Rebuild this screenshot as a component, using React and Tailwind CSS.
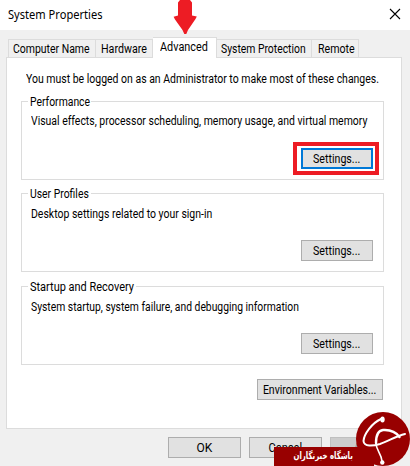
import React from "react";

const tabs = [
  { name: "Computer Name", box: "w-[88px] pl-[4px]", scale: "scale-x-[0.872]" },
  { name: "Hardware", box: "w-[57px] pl-[5px]", scale: "scale-x-[0.89]" },
  { name: "Advanced", box: "w-[64px] pl-[7px]", scale: "scale-x-[0.905]", active: true },
  { name: "System Protection", box: "w-[95px] pl-[4px]", scale: "scale-x-[0.863]" },
  { name: "Remote", box: "w-[47px] pl-[6px]", scale: "scale-x-[0.885]" },
];

const groups = [
  {
    title: "Performance",
    titleBox: "w-[63px]",
    titleScale: "scale-x-[0.865]",
    text: "Visual effects, processor scheduling, memory usage, and virtual memory",
    textBox: "pt-[13px] h-[28px]",
    textScale: "scale-x-[0.871]",
    focused: true,
  },
  {
    title: "User Profiles",
    titleBox: "w-[63px]",
    titleScale: "scale-x-[0.866]",
    text: "Desktop settings related to your sign-in",
    textBox: "pt-[14px] h-[29px]",
    textScale: "scale-x-[0.873]",
  },
  {
    title: "Startup and Recovery",
    titleBox: "w-[108px]",
    titleScale: "scale-x-[0.914]",
    text: "System startup, system failure, and debugging information",
    textBox: "pt-[14px] h-[29px]",
    textScale: "scale-x-[0.861]",
    spacing: "mt-px",
  },
];

const Label = ({ children, className = "" }) => (
  <span className={`block origin-left whitespace-nowrap ${className}`}>
    {children}
  </span>
);

const Button = ({ children, className = "", scale = "scale-x-[0.885]" }) => (
  <button
    type="button"
    className={`flex h-[21px] shrink-0 items-center justify-center pt-[2px] ${className}`}
  >
    <span className={`block whitespace-nowrap ${scale}`}>{children}</span>
  </button>
);

const GroupBox = ({ group }) => (
  <section className={`h-[86px] w-[363px] ${group.spacing || ""}`}>
    {/* title sits in the middle of the top border */}
    <div className="-mb-[8px] flex h-[15px] items-center">
      <span className="h-px w-[7px] bg-[#dcdcdc]" />
      <div className={`pt-[2px] pl-[2px] ${group.titleBox}`}>
        <Label className={`w-0 ${group.titleScale}`}>{group.title}</Label>
      </div>
      <span className="h-px flex-1 bg-[#dcdcdc]" />
    </div>
    <div className="h-[79px] border border-t-0 border-[#dcdcdc]">
      <div className={`pl-[9px] ${group.textBox}`}>
        <Label className={`w-0 ${group.textScale}`}>{group.text}</Label>
      </div>
      <div className="flex justify-end">
        {group.focused ? (
          <div className="mt-[13px] mr-[4px] border-4 border-[#ed1c24] py-[2px] pr-[2px] pl-[4px]">
            <Button className="w-[72px] border-2 border-[#0078d7] bg-[#e1e1e1]">
              Settings...
            </Button>
          </div>
        ) : (
          <Button className="mt-[18px] mr-[10px] w-[72px] border border-[#adadad] bg-[#e1e1e1]">
            Settings...
          </Button>
        )}
      </div>
    </div>
  </section>
);

const Arrow = () => (
  <svg className="absolute top-0 left-[173px]" width="25" height="35" viewBox="0 0 25 35">
    <path
      d="M7 0H17L19 2.5V15.5L23.8 16.6L22.5 19L15 30L13.3 34H11.3L9.5 30L2 19.5L0.6 16.8L5 15.5V2.5Z"
      fill="#ed1c24"
    />
  </svg>
);

const Watermark = () => (
  <div className="absolute top-[412px] left-[274px] h-[54px] w-[136px]">
    <div
      dir="rtl"
      className="absolute top-[35px] left-0 flex h-[19px] w-[100px] bg-[#980000] pt-[2px] pr-[21px]"
    >
      <span className="block origin-right scale-x-[0.7] font-['DejaVu_Sans',sans-serif] text-[10px] leading-[14px] font-bold whitespace-nowrap text-white">
        باشگاه خبرنگاران
      </span>
    </div>
    <svg className="absolute top-0 left-[82px]" width="54" height="54" viewBox="0 0 54 54">
      <circle cx="27" cy="27" r="27" fill="#980000" />
      <g fill="none" stroke="#fff" strokeLinecap="round" strokeLinejoin="round">
        <path d="M25 7C16 11 8 22 7.5 29C8 35 17 34 24 32C33 29 40 24 49 22" strokeWidth="2" />
        <path d="M20 31C20 23 22 18.5 27 18C34 17.5 40 20 43.5 25" strokeWidth="2.4" />
        <path d="M20 31C20 38 25 41 26 49" strokeWidth="1.6" />
      </g>
      <ellipse cx="26.5" cy="7.5" rx="2.2" ry="3" fill="#fff" />
      <circle cx="26.3" cy="50.5" r="2.2" fill="#fff" />
    </svg>
  </div>
);

const App = () => {
  return (
    <div className="relative flex h-[466px] w-[410px] flex-col overflow-hidden bg-[#f0f0f0] font-['Roboto',sans-serif] text-[12px] leading-[15px] text-black">
      {/* Title bar */}
      <header className="flex h-[30px] items-center justify-between bg-white pr-[9px] pb-[2px] pl-[8px]">
        <Label className="scale-x-[0.925] font-['Noto_Sans',sans-serif]">System Properties</Label>
        <svg width="12" height="12" viewBox="0 0 12 12" stroke="#000" strokeWidth="1.1">
          <path d="M1 1L11 11M11 1L1 11" />
        </svg>
      </header>

      {/* Tabs */}
      <nav className="flex h-[27px] items-end pl-[8px]">
        {tabs.map((tab) => (
          <div
            key={tab.name}
            className={`border-t border-r border-[#dcdcdc] pt-[2px] first:border-l ${tab.box} ${
              tab.active ? "z-10 -mb-px h-[21px] bg-white" : "h-[18px]"
            }`}
          >
            <Label className={`w-0 ${tab.scale}`}>{tab.name}</Label>
          </div>
        ))}
      </nav>

      {/* Advanced page */}
      <main className="ml-[6px] h-[372px] w-[396px] border border-[#dcdcdc] bg-white pl-[14px]">
        <div className="h-[36px] pt-[14px] pl-[5px]">
          <Label className="w-0 scale-x-[0.873]">
            You must be logged on as an Administrator to make most of these changes.
          </Label>
        </div>
        <div className="flex flex-col gap-[6px]">
          {groups.map((group) => (
            <GroupBox key={group.title} group={group} />
          ))}
        </div>
        <div className="mt-[14px] flex w-[362px] justify-end">
          <Button
            className="w-[126px] border border-[#adadad] bg-[#e1e1e1]"
            scale="scale-x-[0.878]"
          >
            Environment Variables...
          </Button>
        </div>
      </main>

      {/* Dialog buttons */}
      <footer className="mt-[8px] flex gap-[8px] pl-[168px]">
        <Button className="w-[73px] border border-[#adadad] bg-[#e1e1e1]" scale="scale-x-100">
          OK
        </Button>
        <Button className="w-[73px] border border-[#adadad] bg-[#e1e1e1]" scale="scale-x-[0.92]">
          Cancel
        </Button>
        <Button className="w-[73px] border border-[#bfbfbf] bg-[#cccccc] text-[#838383]">
          Apply
        </Button>
      </footer>

      <Arrow />
      <Watermark />
    </div>
  );
};

export default App;
